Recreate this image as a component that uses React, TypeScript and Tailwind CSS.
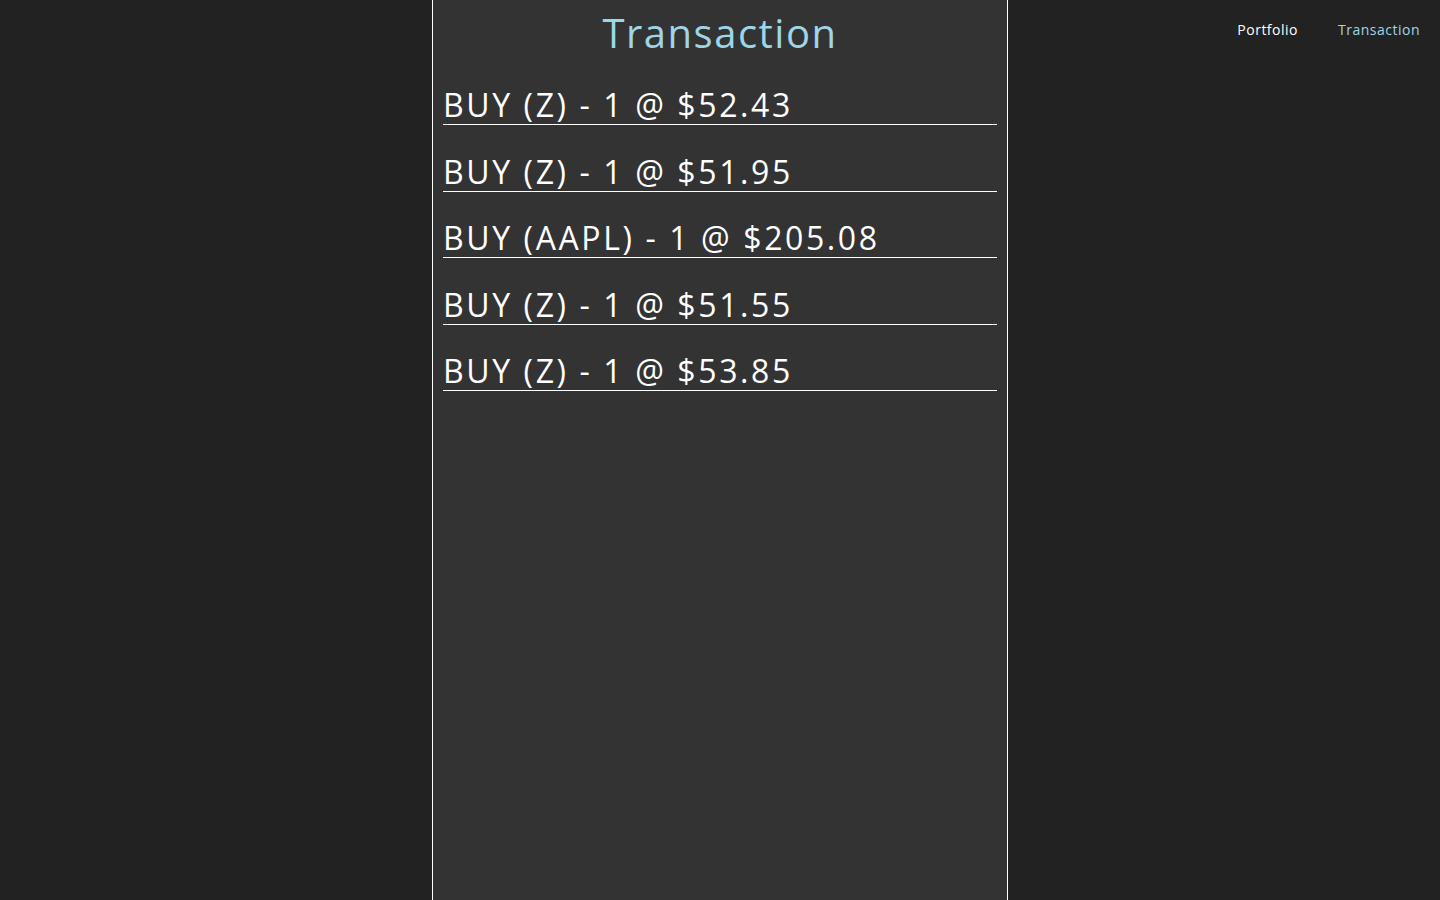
import React from 'react';

const transactions = [
  { side: 'BUY', symbol: 'Z', qty: 1, price: 52.43 },
  { side: 'BUY', symbol: 'Z', qty: 1, price: 51.95 },
  { side: 'BUY', symbol: 'AAPL', qty: 1, price: 205.08 },
  { side: 'BUY', symbol: 'Z', qty: 1, price: 51.55 },
  { side: 'BUY', symbol: 'Z', qty: 1, price: 53.85 },
];

const App: React.FC = () => {
  return (
    <div
      className="min-h-screen bg-[#222222] grid grid-cols-[1fr_576px_1fr]"
      style={{ fontFamily: '"Open Sans", "Liberation Sans", sans-serif' }}
    >
      <div />

      <main className="min-h-screen bg-[#333333] border-x border-white px-[10px]">
        <h1 className="text-center text-[40px] leading-[48px] pt-[9px] text-[#9fd6e6] tracking-[1.5px]">Transaction</h1>
        <ul>
          {transactions.map((t, i) => (
            <li
              key={i}
              className="mt-[26.5px] first:mt-[28px] border-b border-white text-white text-[32px] leading-[39px] tracking-[2.6px]"
            >
              {t.side} ({t.symbol}) - {t.qty} @ ${t.price.toFixed(2)}
            </li>
          ))}
        </ul>
      </main>

      <nav className="flex justify-end items-start gap-10 pr-5 pt-[21px] text-[14px] leading-[18px] tracking-[0.5px]">
        <a className="text-white cursor-pointer">Portfolio</a>
        <a className="text-[#9fd6e6] cursor-pointer">Transaction</a>
      </nav>
    </div>
  );
};

export default App;
